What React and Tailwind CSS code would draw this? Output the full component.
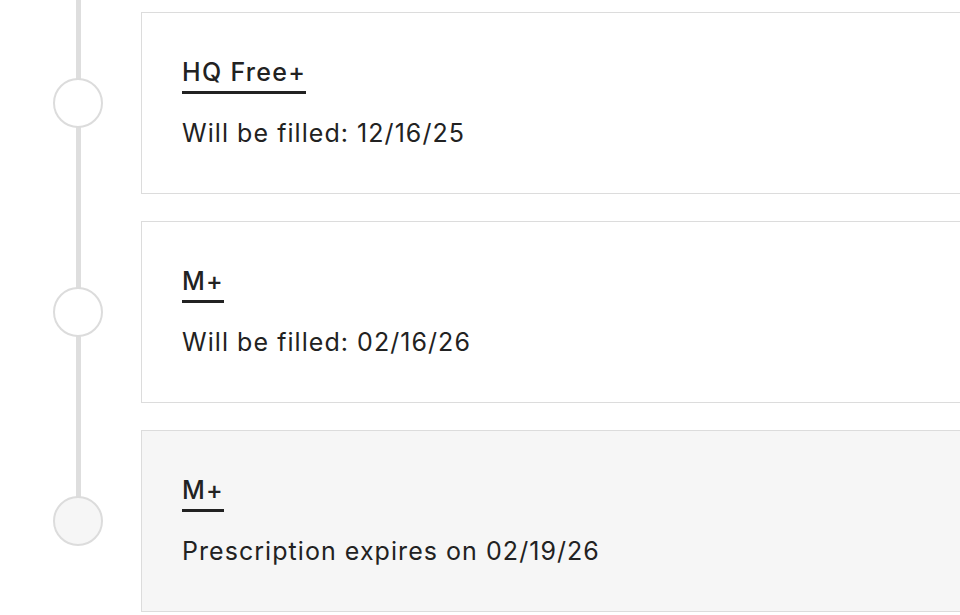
const items = [
  { title: "HQ Free+", text: "Will be filled: 12/16/25", muted: false },
  { title: "M+", text: "Will be filled: 02/16/26", muted: false },
  { title: "M+", text: "Prescription expires on 02/19/26", muted: true },
];

export default function App() {
  return (
    <div
      className="relative h-[615px] w-[960px] overflow-hidden bg-white text-[#222]"
      style={{ fontFamily: "Inter, 'Noto Sans', sans-serif" }}
    >
      {/* timeline rail */}
      <div className="absolute left-[76px] top-0 h-[498px] w-[5px] bg-[#dedede]" />

      <div className="flex flex-col gap-[27px] pt-[12px]">
        {items.map((item, i) => (
          <div key={i} className="flex items-center">
            <div className="w-[141px] shrink-0 pl-[53px]">
              <div
                className={`relative h-[50px] w-[50px] rounded-full border-2 border-[#dcdcdc] ${
                  item.muted ? "bg-[#f6f6f6]" : "bg-white"
                }`}
              />
            </div>
            <div
              className={`h-[182px] w-[840px] shrink-0 border border-[#dcdcdc] pl-[40px] pt-[44px] ${
                item.muted ? "bg-[#f6f6f6]" : "bg-white"
              }`}
            >
              <div className="inline-block border-b-[3px] border-[#222] pb-[4px] text-[25px] leading-[30px] font-medium tracking-[1.3px]">
                {item.title}
              </div>
              <p className="mt-[24px] text-[25px] leading-[30px] tracking-[1.05px]">{item.text}</p>
            </div>
          </div>
        ))}
      </div>
    </div>
  );
}
